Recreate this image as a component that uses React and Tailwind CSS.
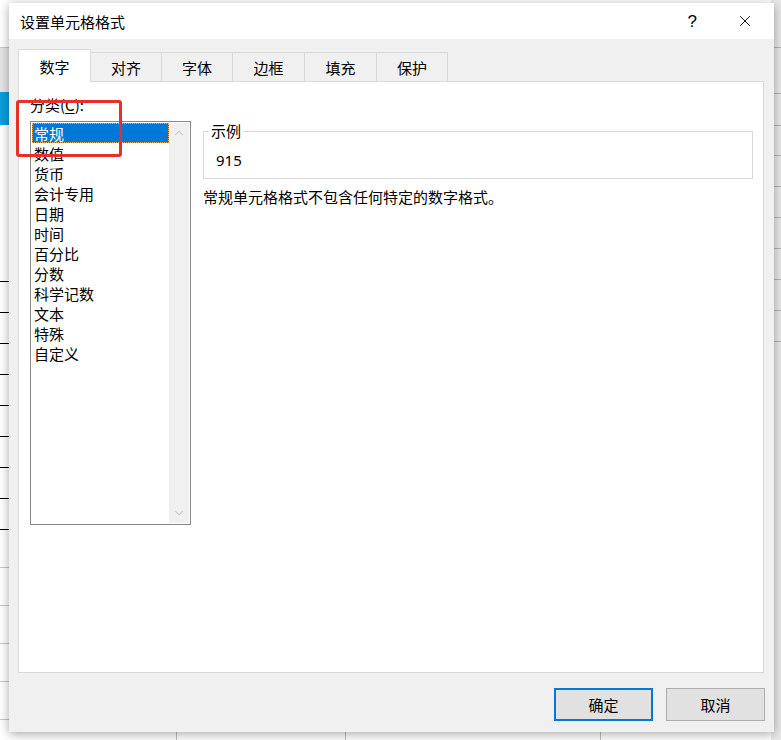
import { X, ChevronUp, ChevronDown } from "lucide-react";

const FONT = { fontFamily: '"Noto Sans CJK SC", "Microsoft YaHei", sans-serif' };

const tabs = [
  { label: "数字", w: "w-[73px]" },
  { label: "对齐", w: "w-[71px]" },
  { label: "字体", w: "w-[71px]" },
  { label: "边框", w: "w-[72px]" },
  { label: "填充", w: "w-[72px]" },
  { label: "保护", w: "w-[71px]" },
];
const categories = [
  "常规",
  "数值",
  "货币",
  "会计专用",
  "日期",
  "时间",
  "百分比",
  "分数",
  "科学记数",
  "文本",
  "特殊",
  "自定义",
];

function Backdrop() {
  // the spreadsheet peeking out behind the dialog
  const leftLines = [281, 312, 343, 374, 405, 436, 467, 498, 529];
  const lightLines = [567, 605, 643, 681, 719];
  return (
    <div className="absolute inset-0 bg-white">
      <div className="absolute left-0 top-[47px] h-[45px] w-[12px] border-t border-[#c8c8c8] bg-[#e6e6e6]" />
      <div className="absolute left-0 top-[92px] h-[33px] w-[12px] bg-[#0a9ee0]" />
      {leftLines.map((y) => (
        <div key={y} className="absolute left-0 h-px w-[12px] bg-black" style={{ top: y }} />
      ))}
      {lightLines.map((y) => (
        <div key={y} className="absolute left-0 h-px w-[12px] bg-[#c8c8c8]" style={{ top: y }} />
      ))}
      <div className="absolute right-0 top-0 h-full w-[10px] bg-[#e8e8e8]" />
      {[47, 93, 125, 155, 186, 217, 248, 279, 310, 341].map((y) => (
        <div key={y} className="absolute right-0 h-px w-[10px] bg-[#b5b5b5]" style={{ top: y }} />
      ))}
      <div className="absolute bottom-0 left-[176px] h-[8px] w-px bg-[#bdbdbd]" />
      <div className="absolute bottom-0 left-[345px] h-[8px] w-px bg-[#bdbdbd]" />
      <div className="absolute bottom-0 left-[600px] h-[8px] w-px bg-[#bdbdbd]" />
    </div>
  );
}

export default function App() {
  return (
    <div className="relative h-[740px] w-[781px] overflow-hidden text-black" style={FONT}>
      <Backdrop />

      <div className="absolute left-[9px] top-[3px] flex h-[729px] w-[765px] flex-col bg-[#f0f0f0] shadow-[0_2px_10px_rgba(0,0,0,0.35)]">
        {/* title bar */}
        <div className="flex h-[36px] items-center bg-white pl-[11px]">
          <span className="text-[15px] leading-none">设置单元格格式</span>
          <span className="ml-auto mr-[39px] text-[17px] leading-none" style={{ fontFamily: '"Liberation Sans", sans-serif' }}>
            ?
          </span>
          <X className="mr-[20px] h-[18px] w-[18px]" strokeWidth={1.2} />
        </div>

        {/* tabs */}
        <div className="mt-[10px] flex h-[32px] items-end pl-[9px]">
          {tabs.map((t, i) =>
            i === 0 ? (
              <div
                key={t.label}
                className={`relative z-10 -mb-px flex h-[33px] ${t.w} items-center justify-center border border-b-0 border-[#d9d9d9] bg-white text-[15px] leading-none`}
              >
                {t.label}
              </div>
            ) : (
              <div
                key={t.label}
                className={`flex h-[29px] ${t.w} items-center justify-center border border-l-0 border-b-0 border-[#d9d9d9] text-[15px] leading-none`}
              >
                {t.label}
              </div>
            )
          )}
        </div>

        {/* panel */}
        <div className="ml-[9px] flex h-[592px] w-[746px] border border-[#d9d9d9] bg-white">
          <div className="ml-[11px] mt-[15px] flex flex-col">
            <div className="text-[15px] leading-none">
              分类(<span className="underline underline-offset-2">C</span>):
            </div>
            <div className="mt-[9px] flex h-[404px] w-[161px] border border-[#828790] p-px">
              <div className="flex flex-1 flex-col">
                {categories.map((c, i) => (
                  <div
                    key={c}
                    className={
                      i === 0
                        ? "flex h-[20px] items-center border border-dotted border-[#f0b060] bg-[#0078d7] pl-[1px] text-[15px] leading-none text-white"
                        : "flex h-[20px] items-center pl-[2px] text-[15px] leading-none"
                    }
                  >
                    {c}
                  </div>
                ))}
              </div>
              <div className="flex w-[20px] flex-col items-center justify-between bg-[#f0f0f0] py-[3px]">
                <ChevronUp className="h-[14px] w-[14px] text-[#c2c2c2]" strokeWidth={1.8} />
                <ChevronDown className="h-[14px] w-[14px] text-[#c2c2c2]" strokeWidth={1.8} />
              </div>
            </div>
          </div>

          <div className="ml-[12px] mt-[49px] flex flex-col">
            <div className="relative h-[48px] w-[550px] border border-[#d9d9d9]">
              <span className="absolute -top-[9px] left-[5px] bg-white px-[2px] text-[15px] leading-none">
                示例
              </span>
              <div className="ml-[12px] mt-[21px] text-[15px] leading-none" style={{ fontFamily: '"Noto Sans", sans-serif' }}>
                915
              </div>
            </div>
            <div className="mt-[10px] text-[15px] leading-none">常规单元格格式不包含任何特定的数字格式。</div>
          </div>
        </div>

        {/* buttons */}
        <div className="mt-[15px] flex justify-end gap-[13px] pr-[9px]">
          <button className="flex h-[33px] w-[99px] items-center justify-center border-2 border-[#0078d7] bg-[#e1e1e1] text-[15px] leading-none">
            确定
          </button>
          <button className="flex h-[33px] w-[99px] items-center justify-center border border-[#adadad] bg-[#e1e1e1] text-[15px] leading-none">
            取消
          </button>
        </div>
      </div>

      {/* red annotation */}
      <div className="absolute left-[16px] top-[100px] h-[57px] w-[106px] rounded-[3px] border-[3px] border-[#e8302a]" />
    </div>
  );
}
